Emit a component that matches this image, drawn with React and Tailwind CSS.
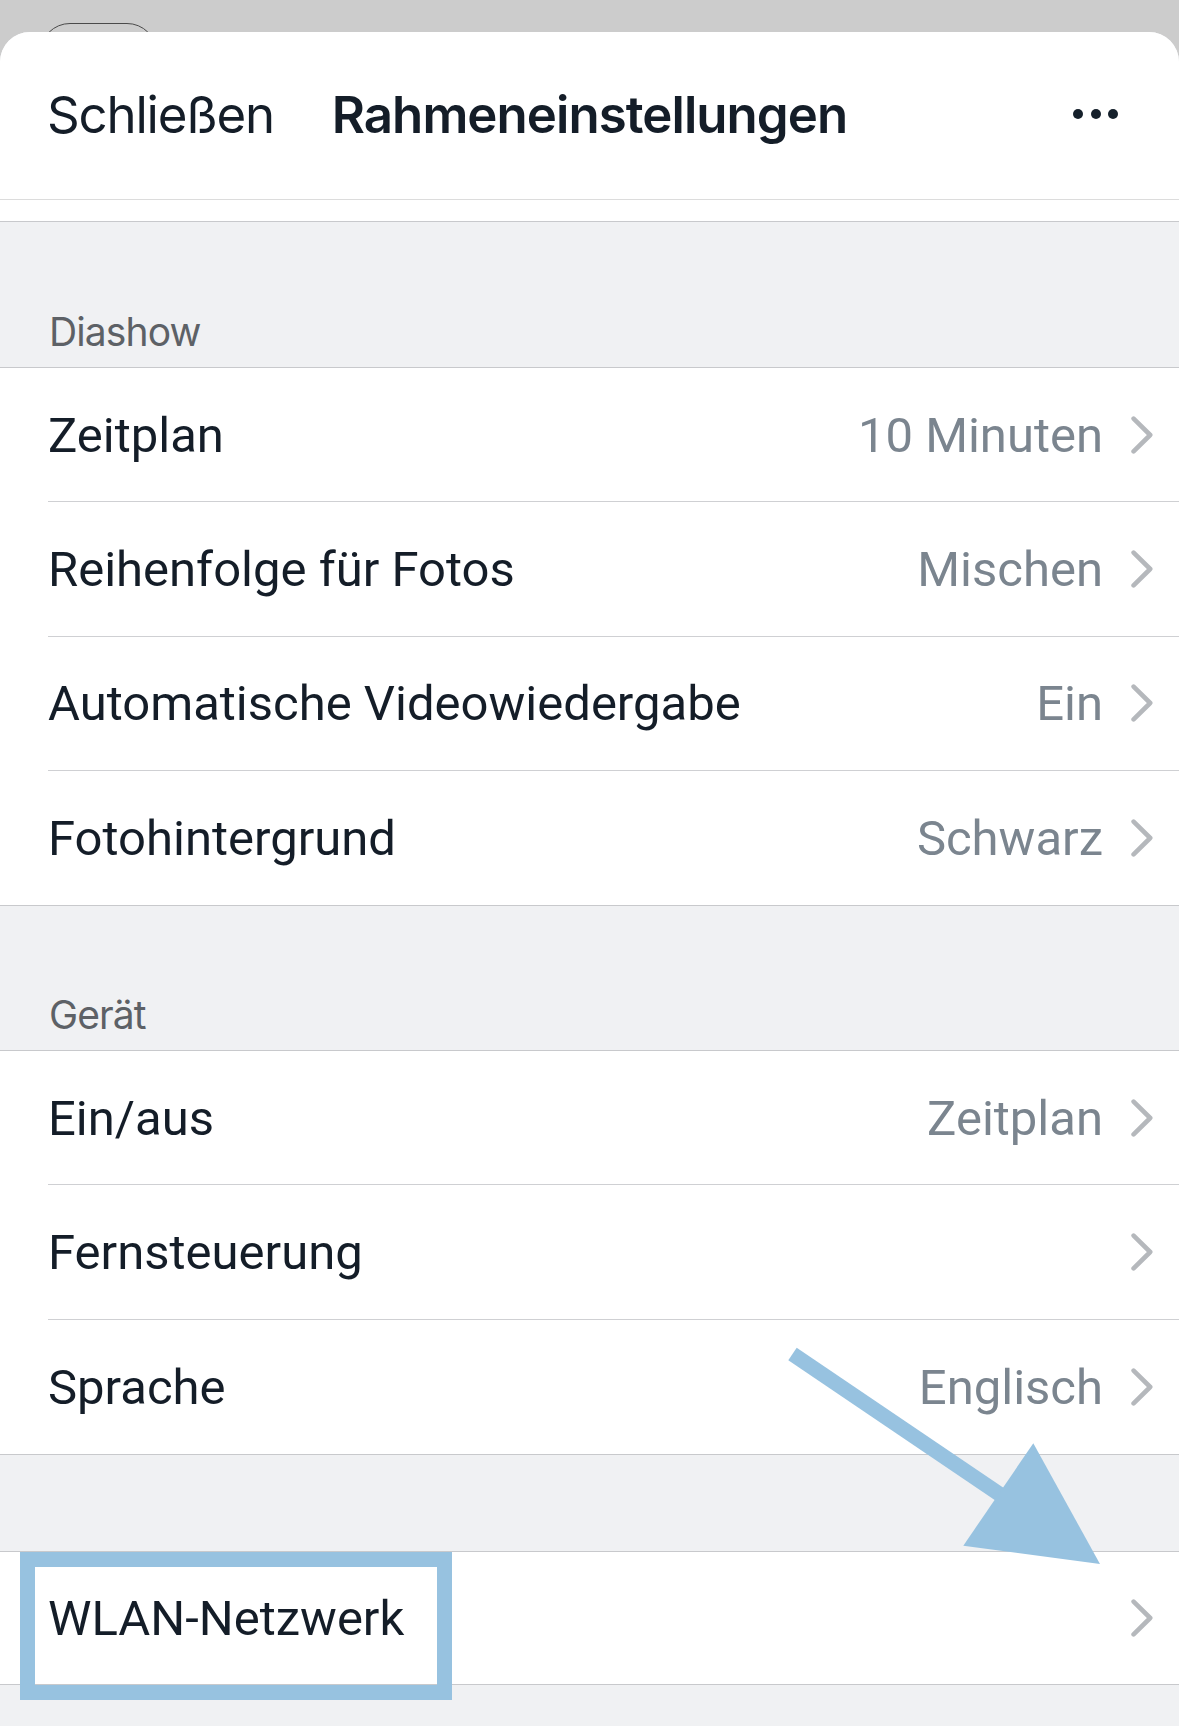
import React from "react";

const Chevron = () => (
  <svg width="22" height="38" viewBox="0 0 22 38" className="shrink-0">
    <path d="M2.6 2.6 L19.2 19 L2.6 35.4" fill="none" stroke="#b5b8bc" strokeWidth="4.6" strokeLinecap="round" strokeLinejoin="round" />
  </svg>
);

const rowFont = { fontFamily: "Roboto, 'Noto Sans', 'Liberation Sans', sans-serif" };

const Row = ({ label, value, last, h = "h-[134.25px]" }) => (
  <div className={`pl-[48px] bg-white ${h}`}>
    <div className={`h-full flex items-center pr-[26px] ${last ? "" : "border-b border-[#cfd0d3]"}`}>
      <span className="flex-1 text-[49px] text-[#141d28] translate-y-[1px]" style={rowFont}>{label}</span>
      {value ? <span className="text-[49px] text-[#7b858f] mr-[28px] translate-y-[1px]" style={rowFont}>{value}</span> : null}
      <Chevron />
    </div>
  </div>
);

const SectionHeader = ({ title, h }) => (
  <div className={`${h} flex items-end pl-[49px] pb-[16px]`}>
    <span className="text-[39px] leading-none text-[#5d6166] tracking-[-0.9px]">{title}</span>
  </div>
);

export default function App() {
  return (
    <div
      className="relative w-[1179px] h-[1726px] bg-[#cccccc] overflow-hidden"
      style={{ fontFamily: "Inter, 'Noto Sans', 'Liberation Sans', sans-serif" }}
    >
      <div className="absolute left-[40px] top-[23px] w-[117px] h-[60px] rounded-[40px] border border-[#4a4a4a]" />
      <div className="relative mt-[32px] h-[1694px] bg-[#f0f1f3] rounded-t-[30px] overflow-hidden flex flex-col">
        <div className="h-[168px] shrink-0 bg-white border-b border-[#dcdcdc] grid grid-cols-[1fr_auto_1fr] items-center">
          <span className="pl-[47px] text-[51px] text-[#141d28] tracking-[-1.2px]">Schließen</span>
          <span className="text-[51px] font-semibold text-[#141d28] tracking-[-0.95px]">Rahmeneinstellungen</span>
          <div className="flex justify-end pr-[61px] gap-[7.5px] items-center -translate-y-[2px]">
            <span className="w-[10px] h-[10px] rounded-full bg-[#15202b]" />
            <span className="w-[10px] h-[10px] rounded-full bg-[#15202b]" />
            <span className="w-[10px] h-[10px] rounded-full bg-[#15202b]" />
          </div>
        </div>
        <div className="h-[22px] shrink-0 bg-white border-b border-[#c8c9cc]" />
        <SectionHeader title="Diashow" h="h-[145px] shrink-0" />
        <div className="border-y border-[#c8c9cc] shrink-0">
          <Row label="Zeitplan" value="10 Minuten" />
          <Row label="Reihenfolge für Fotos" value="Mischen" />
          <Row label="Automatische Videowiedergabe" value="Ein" />
          <Row label="Fotohintergrund" value="Schwarz" last />
        </div>
        <SectionHeader title="Gerät" h="h-[144px] shrink-0" />
        <div className="border-y border-[#c8c9cc] shrink-0">
          <Row label="Ein/aus" value="Zeitplan" />
          <Row label="Fernsteuerung" />
          <Row label="Sprache" value="Englisch" last />
        </div>
        <div className="h-[96px] shrink-0" />
        <div className="border-y border-[#c8c9cc] shrink-0">
          <Row label="WLAN-Netzwerk" last h="h-[132px]" />
        </div>
      </div>

      <div className="absolute left-[19.5px] top-[1551.5px] w-[432px] h-[148px] border-[15px] border-[#97c2e0]" />
      <svg className="absolute left-0 top-0 pointer-events-none" width="1179" height="1726" viewBox="0 0 1179 1726">
        <line x1="792.5" y1="1354" x2="1000" y2="1494.5" stroke="#97c2e0" strokeWidth="15" />
        <polygon points="1033.3,1443.3 963.3,1545.7 1100,1564" fill="#97c2e0" />
      </svg>
    </div>
  );
}
